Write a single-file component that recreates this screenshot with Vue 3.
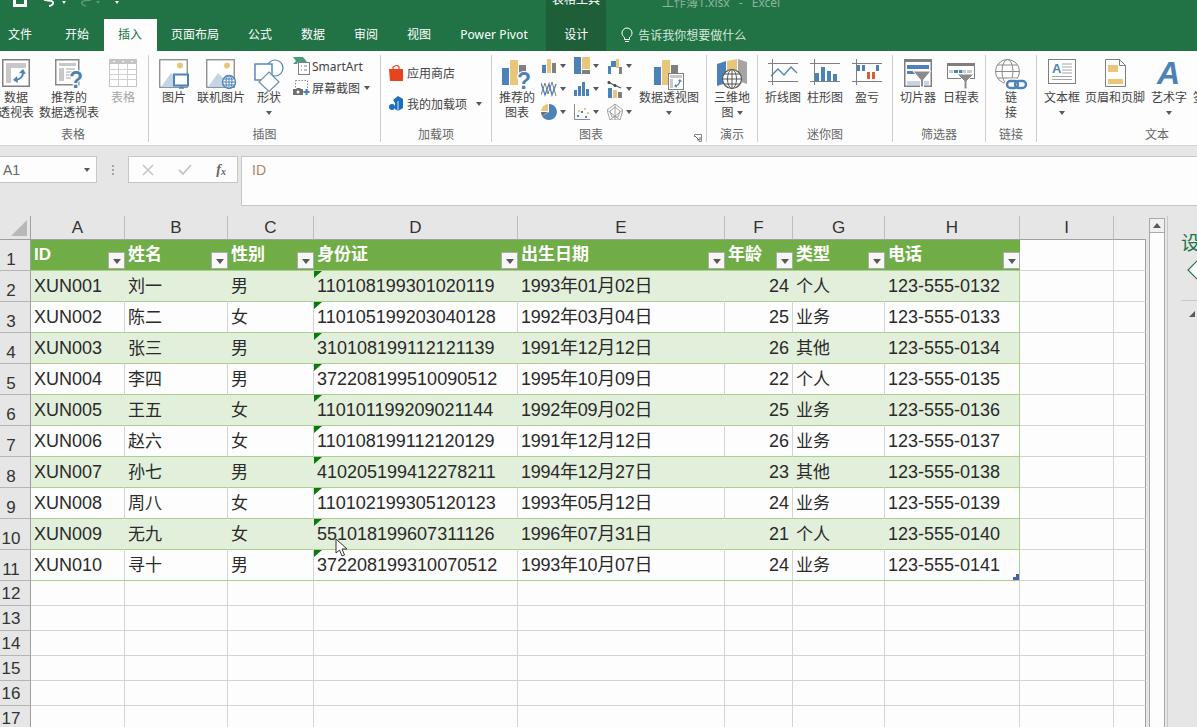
<script setup>
const columns = ['A', 'B', 'C', 'D', 'E', 'F', 'G', 'H', 'I', '']
const headers = ['ID', '姓名', '性别', '身份证', '出生日期', '年龄', '类型', '电话']
const people = [
  ['XUN001', '刘一', '男', '110108199301020119', '1993年01月02日', 24, '个人', '123-555-0132'],
  ['XUN002', '陈二', '女', '110105199203040128', '1992年03月04日', 25, '业务', '123-555-0133'],
  ['XUN003', '张三', '男', '310108199112121139', '1991年12月12日', 26, '其他', '123-555-0134'],
  ['XUN004', '李四', '男', '372208199510090512', '1995年10月09日', 22, '个人', '123-555-0135'],
  ['XUN005', '王五', '女', '110101199209021144', '1992年09月02日', 25, '业务', '123-555-0136'],
  ['XUN006', '赵六', '女', '110108199112120129', '1991年12月12日', 26, '业务', '123-555-0137'],
  ['XUN007', '孙七', '男', '410205199412278211', '1994年12月27日', 23, '其他', '123-555-0138'],
  ['XUN008', '周八', '女', '110102199305120123', '1993年05月12日', 24, '业务', '123-555-0139'],
  ['XUN009', '无九', '女', '551018199607311126', '1996年07月31日', 21, '个人', '123-555-0140'],
  ['XUN010', '寻十', '男', '372208199310070512', '1993年10月07日', 24, '业务', '123-555-0141']
]
const emptyRows = [12, 13, 14, 15, 16, 17]
const cellClass = ['c-id', 'c-cjk', 'c-cjk', 'c-id', 'c-date', 'c-num', 'c-cjk', 'c-id']
</script>

<template>
  <div class="app">
    <div class="titlebar">
      <div class="qat">
        <svg class="q-save" width="14" height="7" viewBox="0 0 14 7"><path d="M0 0h14v7H0z" fill="#fff"/><path d="M3 0h8v4H3z" fill="#217346"/></svg>
        <svg class="q-undo" width="12" height="7" viewBox="0 0 12 7"><path d="M1 0c3 1 8 0 9 2s-2 4-4 4" fill="none" stroke="#fff" stroke-width="1.8"/></svg>
        <span class="q-caret"></span>
        <svg class="q-redo" width="18" height="7" viewBox="0 0 18 7"><path d="M15 0c-3 1-8 0-9 2s2 4 4 4" fill="none" stroke="#5b9a78" stroke-width="1.6"/></svg>
        <span class="q-caret dim"></span>
        <span class="q-caret far"></span>
      </div>
      <div class="ctx-title">表格工具</div>
      <div class="doc-title">工作簿1.xlsx - Excel</div>
    </div>

    <div class="tabs">
      <span class="tab first">文件</span>
      <span class="tab second">开始</span>
      <span class="tab active">插入</span>
      <span class="tab">页面布局</span>
      <span class="tab">公式</span>
      <span class="tab">数据</span>
      <span class="tab">审阅</span>
      <span class="tab">视图</span>
      <span class="tab pivot">Power Pivot</span>
      <span class="tab design">设计</span>
      <span class="tell">
        <svg width="12" height="16" viewBox="0 0 12 16"><path d="M3.5 10.5C2 9.3 1 8 1 6a5 5 0 0 1 10 0c0 2-1 3.3-2.5 4.5v2h-5z" fill="none" stroke="#fff" stroke-width="1"/><path d="M4 14.5h4" stroke="#fff"/></svg>
        告诉我你想要做什么
      </span>
    </div>

    <div class="ribbon">
      <section class="grp g1">
        <div class="grp-body">
          <div class="lg w36">
            <div class="ic"><svg width="28" height="28" viewBox="0 0 28 28"><rect x=".75" y=".75" width="26.5" height="26.5" fill="#fff" stroke="#7f7f7f" stroke-width="1.5"/><path d="M4 4h20v5H9v15H4z" fill="#c8c8c8"/><path d="M21 12c1 5-3 9-8 9" fill="none" stroke="#4d82b8" stroke-width="1.8"/><path d="M17 14l4-4 3 5zM15 17l-4 4 5 3z" fill="#4d82b8"/></svg></div>
            <span>数据</span><span>透视表</span>
          </div>
          <div class="lg w70">
            <div class="ic"><svg width="28" height="31" viewBox="0 0 28 31"><rect x=".75" y=".75" width="23" height="25" fill="#fff" stroke="#8a8a8a" stroke-width="1.5"/><path d="M4 4h17v3H4zM4 9h5v13H4z" fill="#c8c8c8"/><path d="M11 10h9M11 13h7M11 16h6M11 19h5" stroke="#a5a5a5"/><text class="q-mark" x="14" y="29">?</text></svg></div>
            <span>推荐的</span><span>数据透视表</span>
          </div>
          <div class="lg w38 off">
            <div class="ic"><svg width="28" height="28" viewBox="0 0 28 28"><rect x=".5" y=".5" width="27" height="27" fill="#fff" stroke="#c4c4c4"/><path d="M0 0h28v5H0z" fill="#c4c4c4"/><path d="M0 10.5h28M0 15.5h28M0 20.5h28M9.5 5v23M18.5 5v23" stroke="#cfcfcf"/><path d="M4 2h2v1H4zM13 2h2v1h-2zM22 2h2v1h-2z" fill="#fff"/></svg></div>
            <span>表格</span>
          </div>
        </div>
        <div class="grp-label">表格</div>
      </section>

      <section class="grp g2">
        <div class="grp-body">
          <div class="lg w50">
            <div class="ic"><svg width="30" height="31" viewBox="0 0 30 31"><rect x=".75" y=".75" width="27.5" height="27.5" fill="#fff" stroke="#7f7f7f" stroke-width="1.2"/><circle cx="21" cy="6.5" r="3" fill="#e8c77a"/><path d="M2 28l10-14 6 7 3 7z" fill="#c4d5e7"/><rect x="15" y="15.5" width="14" height="11" fill="#fff" stroke="#4d82b8" stroke-width="2"/><path d="M20 29h5M22.5 27v2" stroke="#4d82b8" stroke-width="1.5"/></svg></div>
            <span>图片</span>
          </div>
          <div class="lg w44">
            <div class="ic"><svg width="30" height="31" viewBox="0 0 30 31"><rect x=".75" y=".75" width="27.5" height="27.5" fill="#fff" stroke="#7f7f7f" stroke-width="1.2"/><circle cx="21" cy="6.5" r="3" fill="#e8c77a"/><path d="M2 28l10-14 7 7 3 7z" fill="#c4d5e7"/><g fill="#fff" stroke="#4d82b8"><circle cx="23" cy="23" r="6.5" stroke-width="1.4"/><ellipse cx="23" cy="23" rx="3" ry="6.5"/></g><path d="M16.5 23h13M17.5 20h11M17.5 26h11M23 16.5v13" stroke="#4d82b8" fill="none"/></svg></div>
            <span>联机图片</span>
          </div>
          <div class="lg w52">
            <div class="ic"><svg width="30" height="31" viewBox="0 0 30 31"><circle cx="21" cy="9" r="8" fill="#fff" stroke="#4d82b8" stroke-width="1.2"/><rect x="1" y="5" width="17" height="16" fill="#fff" stroke="#4d82b8" stroke-width="1.4"/><path d="M15 13l10 10-10 9.5L5 23z" fill="#fff" stroke="#6c8fb0" stroke-width="1.2"/></svg></div>
            <span>形状</span><i class="caret"></i>
          </div>
          <div class="small-col">
            <div class="sm">
              <svg width="17" height="18" viewBox="0 0 17 18"><path d="M0 0h10l4 5H5l-1 2H0l3-3z" fill="#4c9a7a"/><rect x="5.5" y="5.5" width="11" height="12" fill="#fff" stroke="#7f7f7f"/><path d="M8 9h1M11 9h3M8 13h1M11 13h3" stroke="#7f7f7f"/></svg>
              <span class="sm-l">SmartArt</span>
            </div>
            <div class="sm">
              <svg width="17" height="16" viewBox="0 0 17 16"><rect x="2.5" y=".5" width="12" height="11" fill="none" stroke="#8a8a8a" stroke-dasharray="1.5 1.5"/><path d="M0 9h3l1-1h3l1 1h2v6H0z" fill="#6f6f6f"/><circle cx="5" cy="12" r="1.5" fill="#fff"/><path d="M13.5 9v6M10.5 12h6" stroke="#4d82b8" stroke-width="2"/></svg>
              <span class="sm-l">屏幕截图</span><i class="caret caret-in"></i>
            </div>
          </div>
        </div>
        <div class="grp-label">插图</div>
      </section>

      <section class="grp g3">
        <div class="grp-body addins">
          <div class="sm">
            <svg width="14" height="16" viewBox="0 0 14 16"><path d="M0 4h14v12H1z" fill="#e8441c"/><path d="M4 5V2l4-2 2 2v3" fill="none" stroke="#e8441c" stroke-width="1.2"/></svg>
            <span class="sm-l">应用商店</span>
          </div>
          <div class="sm">
            <svg width="14" height="16" viewBox="0 0 14 16"><path d="M4 4l5-4 5 3v9l-5 3-3-2V7z" fill="#1e6fc0"/><circle cx="3" cy="11" r="3" fill="#1e6fc0"/><path d="M9 5v10" stroke="#fff" stroke-width=".8"/></svg>
            <span class="sm-l">我的加载项</span><i class="caret caret-far"></i>
          </div>
        </div>
        <div class="grp-label">加载项</div>
      </section>

      <section class="grp g4">
        <div class="grp-body">
          <div class="lg w50">
            <div class="ic"><svg width="30" height="31" viewBox="0 0 30 31"><path d="M0 9h7v17H0z" fill="#4d82b8"/><path d="M8 1h8v25H8z" fill="#e8c77a"/><path d="M17 6h7v8h-7z" fill="#7f7f7f"/><text class="q-mark" x="15" y="30">?</text></svg></div>
            <span>推荐的</span><span>图表</span>
          </div>
          <div class="chart-grid">
            <div class="ci"><svg width="16" height="16" viewBox="0 0 16 16"><path d="M1 7h4v8H1z" fill="#4d82b8"/><path d="M6 1h4v14H6z" fill="#e8c77a"/><path d="M11 5h4v10h-4z" fill="#7f7f7f"/></svg><i class="caret"></i></div>
            <div class="ci"><svg width="16" height="18" viewBox="0 0 16 18"><path d="M0 0h7v17H0z" fill="#4d82b8"/><path d="M8 0h8v12H8z" fill="#e8c77a"/><path d="M8 13h8v4H8z" fill="#7f7f7f"/></svg><i class="caret"></i></div>
            <div class="ci"><svg width="16" height="16" viewBox="0 0 16 16"><path d="M1 8h3v8H1zM5 3h4v6H4V3z" fill="#4d82b8"/><path d="M9 1h3v9H9z" fill="#e8c77a"/><path d="M12 9h3v7h-3z" fill="#7f7f7f"/></svg><i class="caret"></i></div>
            <div class="ci"><svg width="16" height="16" viewBox="0 0 16 16"><path d="M0 14L4 2l3 11 4-12 4 14" fill="none" stroke="#7f7f7f" stroke-width="1"/><path d="M0 2l4 12 4-11 3 11 4-11" fill="none" stroke="#4d82b8" stroke-width="1.3"/></svg><i class="caret"></i></div>
            <div class="ci"><svg width="16" height="16" viewBox="0 0 16 16"><path d="M0 9h3v6H0zM4 5h3v10H4zM8 1h3v14H8zM12 8h3v7h-3z" fill="#4d82b8"/></svg><i class="caret"></i></div>
            <div class="ci"><svg width="16" height="18" viewBox="0 0 16 18"><path d="M1 8h4v10H1z" fill="#4d82b8"/><path d="M6 10h4v8H6z" fill="#e8c77a"/><path d="M11 12h4v6h-4z" fill="#7f7f7f"/><path d="M1 2l6 3 7 3" fill="none" stroke="#555" stroke-width="1.2"/><circle cx="2" cy="2.5" r="1.5" fill="#444"/><circle cx="8" cy="5.5" r="1.5" fill="#444"/></svg><i class="caret"></i></div>
            <div class="ci"><svg width="16" height="16" viewBox="0 0 16 16"><path d="M8 8V0a8 8 0 1 1-7 12z" fill="#4d82b8"/><path d="M7 7V0a7.5 7.5 0 0 0-7 7z" fill="#e8c77a"/><path d="M0 8h7l-6 4a8 8 0 0 1-1-4z" fill="#6f6f6f"/></svg><i class="caret"></i></div>
            <div class="ci"><svg width="16" height="16" viewBox="0 0 16 16"><path d="M.5 0v15.5H16" fill="none" stroke="#8a8a8a"/><path d="M3 11h2v2H3zM7 7h2v2H7zM11 12h2v2h-2z" fill="#4d82b8"/><path d="M4 6h2v2H4zM10 4h2v2h-2zM13 8h2v2h-2z" fill="#e8c77a"/></svg><i class="caret"></i></div>
            <div class="ci"><svg width="16" height="16" viewBox="0 0 16 16"><path d="M8 0l8 6-3 10H3L0 6zM8 3l5 4-2 6H5L3 7zM8 0v16M0 6l13 10M16 6L3 16" fill="none" stroke="#9a9a9a" stroke-width=".9"/></svg><i class="caret"></i></div>
          </div>
          <div class="lg w58">
            <div class="ic"><svg width="30" height="31" viewBox="0 0 30 31"><path d="M0 8h7v18H0z" fill="#4d82b8"/><path d="M8 1h8v25H8z" fill="#e8c77a"/><path d="M17 6h7v8h-7z" fill="#7f7f7f"/><rect x="14.5" y="14.5" width="15" height="16" fill="#fff" stroke="#7f7f7f"/><path d="M16 16h12v3H16zM16 20h3v9h-3z" fill="#c8c8c8"/><path d="M26 21c0 3-2 6-5 6" fill="none" stroke="#4d82b8" stroke-width="1.2"/><path d="M24 22l2-2 2 3zM22 25l-2 2 3 2z" fill="#4d82b8"/></svg></div>
            <span>数据透视图</span><i class="caret"></i>
          </div>
        </div>
        <div class="grp-label launch">图表</div>
        <svg class="launcher" width="8" height="8" viewBox="0 0 8 8"><path d="M.5 3V.5h7v7H5" fill="none" stroke="#8a8a8a"/><path d="M1 2l4 4M3 6h3V3" fill="none" stroke="#666"/></svg>
      </section>

      <section class="grp g5">
        <div class="grp-body">
          <div class="lg w50">
            <div class="ic"><svg width="30" height="30" viewBox="0 0 30 30"><path d="M0 5l9-3v22l-9 3z" fill="#4d82b8"/><path d="M10 2l10-2v22l-10 2z" fill="#e8c77a"/><path d="M21 0l9 3v22l-9-3z" fill="#a5a5a5"/><g fill="#fff" stroke="#555"><circle cx="15" cy="20" r="9.5" stroke-width="1.2"/><ellipse cx="15" cy="20" rx="4.5" ry="9.5"/></g><path d="M5.5 20h19M7 15h16M7 25h16M15 10.5v19" fill="none" stroke="#555"/></svg></div>
            <span>三维地</span><span class="inline">图<i class="caret caret-in2"></i></span>
          </div>
        </div>
        <div class="grp-label">演示</div>
      </section>

      <section class="grp g6">
        <div class="grp-body">
          <div class="lg w50">
            <div class="ic"><svg width="30" height="27" viewBox="0 0 30 27"><path d="M0 4.5h30M0 22.5h30M4.5 0v26" stroke="#7f7f7f"/><path d="M3 17l7-7 6 6 7-8 6 6" fill="none" stroke="#4d82b8" stroke-width="1.3"/></svg></div>
            <span>折线图</span>
          </div>
          <div class="lg w34">
            <div class="ic"><svg width="30" height="27" viewBox="0 0 30 27"><path d="M0 4.5h30M0 22.5h30M4.5 0v26" stroke="#7f7f7f"/><path d="M5 14h4v8H5zM11 8h4v14h-4zM17 12h4v10h-4zM23 15h4v7h-4z" fill="#4d82b8"/></svg></div>
            <span>柱形图</span>
          </div>
          <div class="lg w50">
            <div class="ic"><svg width="30" height="27" viewBox="0 0 30 27"><path d="M0 4.5h30M0 22.5h30M4.5 0v26" stroke="#7f7f7f"/><path d="M5 6h3v6H5zM10 6h3v6h-3zM24 6h3v6h-3z" fill="#4d82b8"/><path d="M15 13h3v7h-3zM20 13h3v7h-3z" fill="#dd5b37"/></svg></div>
            <span>盈亏</span>
          </div>
        </div>
        <div class="grp-label">迷你图</div>
      </section>

      <section class="grp g7">
        <div class="grp-body">
          <div class="lg w50">
            <div class="ic"><svg width="28" height="28" viewBox="0 0 28 28"><rect x=".75" y=".75" width="26.5" height="26.5" fill="#fff" stroke="#7f7f7f" stroke-width="1.5"/><path d="M0 0h28v3H0z" fill="#7f7f7f"/><path d="M3 6h22v4H3zM3 12h9v3H3z" fill="#4d82b8"/><path d="M3 22h22v4H3z" fill="#c4d5e7"/><path d="M9 12h18l-7.5 9v7h-3v-7z" fill="#8a8a8a" stroke="#fff"/></svg></div>
            <span>切片器</span>
          </div>
          <div class="lg w36">
            <div class="ic"><svg class="tl" width="28" height="26" viewBox="0 0 28 26"><rect x=".5" y=".5" width="27" height="15" fill="#fff" stroke="#7f7f7f"/><path d="M0 0h28v3H0z" fill="#7f7f7f"/><path d="M2 7h4v3H2zM15 7h4v3h-4zM20 7h5v3h-5z" fill="#c8c8c8"/><path d="M7 7h4v3H7zM12 7h3v3h-3z" fill="#4d82b8"/><path d="M10 11h17l-7 7v8h-3v-8z" fill="#8a8a8a" stroke="#fff"/></svg></div>
            <span>日程表</span>
          </div>
        </div>
        <div class="grp-label">筛选器</div>
      </section>

      <section class="grp g8">
        <div class="grp-body">
          <div class="lg w50">
            <div class="ic"><svg width="32" height="31" viewBox="0 0 32 31"><g fill="none" stroke="#8a8a8a"><circle cx="12.5" cy="12.5" r="12"/><ellipse cx="12.5" cy="12.5" rx="5.5" ry="12"/><path d="M.5 12.5h24M2.5 6h20M2.5 19h20"/></g><g fill="#fff" stroke="#fff" stroke-width="5"><rect x="12" y="22" width="11" height="7" rx="3.5"/><rect x="20" y="22" width="11" height="7" rx="3.5"/></g><g fill="none" stroke="#4d82b8" stroke-width="2.4"><rect x="12" y="22" width="11" height="7" rx="3.5"/><rect x="20" y="22" width="11" height="7" rx="3.5"/></g></svg></div>
            <span>链</span><span>接</span>
          </div>
        </div>
        <div class="grp-label">链接</div>
      </section>

      <section class="grp g9">
        <div class="grp-body">
          <div class="lg w50">
            <div class="ic"><svg width="28" height="26" viewBox="0 0 28 26"><rect x=".5" y=".5" width="27" height="24" fill="#fff" stroke="#7f7f7f"/><text class="tb-a" x="4" y="14">A</text><path d="M14 5h10M14 8h10M14 11h10M14 14h10M4 17.5h20M4 20.5h20" stroke="#a5a5a5"/></svg></div>
            <span>文本框</span><i class="caret"></i>
          </div>
          <div class="lg w56">
            <div class="ic"><svg class="hf" width="21" height="28" viewBox="0 0 21 28"><path d="M.5.5h14l6 6v21H.5z" fill="#fff" stroke="#7f7f7f"/><path d="M14.5.5v6h6" fill="none" stroke="#7f7f7f"/><path d="M3 6h10v7H3zM3 20h15v5H3z" fill="#e8c77a"/></svg></div>
            <span>页眉和页脚</span>
          </div>
          <div class="lg w52">
            <div class="ic"><svg width="24" height="28" viewBox="0 0 24 28"><text class="wa" x="0" y="25">A</text></svg></div>
            <span>艺术字</span><i class="caret"></i>
          </div>
          <div class="lg sign"><div class="ic"></div><span>签</span></div>
        </div>
        <div class="grp-label">文本</div>
      </section>
    </div>

    <div class="formula">
      <div class="namebox"><span>A1</span><i class="caret"></i></div>
      <div class="dots"><i></i><i></i><i></i></div>
      <div class="fx-btns">
        <svg width="12" height="12" viewBox="0 0 12 12"><path d="M1 1l10 10M11 1L1 11" stroke="#c4c4c4" stroke-width="1.5"/></svg>
        <svg width="14" height="12" viewBox="0 0 14 12"><path d="M1 6l4 4 8-9" fill="none" stroke="#c4c4c4" stroke-width="1.8"/></svg>
        <span class="fx">f<sub>x</sub></span>
      </div>
      <div class="fx-input">ID</div>
    </div>

    <div class="work">
      <div class="sheet">
        <div class="corner"><i></i></div>
        <div v-for="c in columns" :key="'col' + c" class="colh">{{ c }}</div>

        <div class="rowh">1</div>
        <div v-for="h in headers" :key="h" class="th">
          {{ h }}
          <span class="filter"><i></i></span>
        </div>
        <div class="cell"></div>
        <div class="cell edge"></div>

        <template v-for="(p, r) in people" :key="p[0]">
          <div class="rowh">{{ r + 2 }}</div>
          <div
            v-for="(v, c) in p"
            :key="c"
            class="td"
            :class="[cellClass[c], { band: r % 2 === 0, last: c === 7 }]"
          >
            <i v-if="c === 3" class="tri"></i>
            {{ v }}
            <i v-if="c === 7 && r === 9" class="handle"></i>
          </div>
          <div class="cell"></div>
          <div class="cell edge"></div>
        </template>

        <template v-for="n in emptyRows" :key="n">
          <div class="rowh small">{{ n }}</div>
          <div v-for="k in 9" :key="k" class="cell"></div>
          <div class="cell edge"></div>
        </template>

        <svg class="pointer" width="13" height="19" viewBox="0 0 13 19"><path d="M1 1v14l3.5-3 2.5 6 2.5-1-2.500-6H12z" fill="#fff" stroke="#333" stroke-width="1"/></svg>
      </div>

      <div class="scroll">
        <div class="track">
          <div class="up"><i></i></div>
        </div>
      </div>

      <aside class="pane">
        <div class="pane-t">设</div>
        <svg class="pane-d" width="12" height="26" viewBox="0 0 12 26"><path d="M12 1L1 12l11 11" fill="#fff" stroke="#217346" stroke-width="1.2"/></svg>
        <div class="pane-l"></div>
        <i class="pane-tri"></i>
      </aside>
    </div>
  </div>
</template>

<style>
html, body { margin: 0; overflow: hidden; background: #e6e6e6; }
</style>

<style scoped>
.app {
  width: 1197px; height: 727px; overflow: hidden; display: flex; flex-direction: column;
  background: #e6e6e6; color: #444;
  font: 12px "Noto Sans", "Noto Sans CJK SC", sans-serif;
}
i { display: block; }

/* title strip */
.titlebar { height: 19px; flex: none; background: #217346; display: flex; align-items: flex-start; overflow: hidden; }
.qat { width: 546px; flex: none; display: flex; align-items: flex-start; }
.q-save { margin-left: 13px; }
.q-undo { margin-left: 16px; }
.q-redo { margin-left: 10px; }
.q-caret { width: 0; height: 0; margin: 1px 0 0 7px; border: 2.5px solid transparent; border-top: 3px solid #fff; border-bottom: 0; }
.q-caret.dim { border-top-color: #5b9a78; margin-left: 2px; }
.q-caret.far { margin-left: 15px; }
.ctx-title { width: 60px; height: 19px; flex: none; background: #1e5f3a; color: #fff; text-align: center; line-height: 0; overflow: hidden; }
.doc-title { margin-left: 56px; color: #8db69f; line-height: 6px; word-spacing: 6px; }

/* tabs */
.tabs { height: 32px; flex: none; background: #217346; display: flex; align-items: stretch; color: #fff; white-space: nowrap; }
.tab { padding: 0 14.5px; line-height: 31px; }
.tab.first { margin-left: -6.5px; }
.tab.second { margin-left: 4px; }
.tab.active { background: #fdfdfd; color: #217346; }
.tab.pivot { letter-spacing: .1px; width: 100.5px; box-sizing: border-box; padding-right: 0; }
.tab.design { background: #1e5f3a; padding: 0 18px; }
.tell { margin-left: 15px; display: flex; align-items: center; gap: 5px; padding-bottom: 1px; color: #d6e6dc; }

/* ribbon */
.ribbon { height: 95px; flex: none; box-sizing: border-box; background: #fdfdfd; border-bottom: 1px solid #d4d4d4; display: flex; overflow: hidden; padding-top: 4px; }
.grp { flex: none; height: 87px; box-sizing: border-box; border-right: 1px solid #cfcfcf; display: flex; flex-direction: column; position: relative; }
.grp-body { flex: 1; min-height: 0; display: flex; padding-top: 4px; align-items: flex-start; }
.grp-label { height: 15px; line-height: 15px; text-align: center; color: #666; white-space: nowrap; }
.grp-label.launch { padding-right: 16px; }
.launcher { position: absolute; right: 4px; bottom: 0; }
.g1 { width: 151px; margin-left: -2px; }
.g2 { width: 232px; }
.g3 { width: 111px; }
.g4 { width: 215px; }
.g5 { width: 51px; }
.g6 { width: 135px; }
.g7 { width: 93px; }
.g8 { width: 51px; }
.g9 { width: 240px; border-right: 0; }

.lg { flex: none; display: flex; flex-direction: column; align-items: center; line-height: 15px; white-space: nowrap; }
.lg.off { color: #a6a6a6; }
.ic { height: 31px; width: 100%; display: flex; justify-content: center; align-items: flex-start; }
.ic svg { flex: none; overflow: visible; }
.tl { margin-top: 4px; }
.w34 { width: 34px; } .w36 { width: 36px; } .w38 { width: 38px; } .w44 { width: 44px; }
.w50 { width: 50px; } .w52 { width: 52px; } .w56 { width: 56px; } .w58 { width: 58px; } .w70 { width: 70px; }
.sign { width: 24px; margin-left: -2px; align-items: flex-start; }

.caret { width: 0; height: 0; border: 3.5px solid transparent; border-top: 4px solid #595959; border-bottom: 0; }
.lg > .caret { margin-top: 6px; }
.caret-in { margin-left: 4px; }
.caret-far { margin-left: 9px; }
.caret-in2 { margin-left: 3px; }
.inline { display: flex; align-items: center; }

.small-col { margin: -3px 0 0 -2px; display: flex; flex-direction: column; gap: 2px; }
.sm { display: flex; align-items: center; height: 20px; white-space: nowrap; }
.sm svg { flex: none; }
.sm-l { margin-left: 2px; }
.addins { flex-direction: column; padding: 8px 0 0 8px; gap: 11px; }
.addins .sm-l { margin-left: 4px; }

.chart-grid { flex: none; margin: -5px 0 0 -1px; display: grid; grid-template-columns: repeat(3, 33px); grid-auto-rows: 23px; }
.ci { display: flex; align-items: center; }
.ci svg { flex: none; }
.ci .caret { margin-left: 3px; }

.q-mark { font: bold 23px "Liberation Sans", sans-serif; fill: #4d82b8; stroke: #fff; stroke-width: 2px; paint-order: stroke; }
.tb-a { font: bold 13px "Liberation Sans", sans-serif; fill: #4d82b8; }
.wa { font: italic bold 32px "Liberation Sans", sans-serif; fill: #4d82b8; }

/* formula bar */
.formula { height: 70px; flex: none; box-sizing: border-box; padding-top: 10px; display: flex; align-items: flex-start; }
.namebox { width: 98px; height: 27px; margin-left: -1px; box-sizing: border-box; background: #fdfdfd; border: 1px solid #c6c6c6; display: flex; align-items: center; justify-content: space-between; padding: 0 6px 0 3px; font: 14px "Liberation Sans", sans-serif; color: #666; }
.dots { width: 31px; height: 27px; display: flex; flex-direction: column; align-items: center; justify-content: center; gap: 2px; }
.dots i { width: 2px; height: 2px; background: #a5a5a5; }
.fx-btns { width: 110px; height: 27px; box-sizing: border-box; background: #fdfdfd; border: 1px solid #c6c6c6; display: flex; align-items: center; justify-content: space-between; padding: 0 11px 0 13px; }
.fx { font: italic bold 14px "Liberation Serif", serif; color: #666; line-height: 1; }
.fx sub { font-size: 10px; vertical-align: -1px; line-height: 0; }
.fx-input { flex: 1; height: 50px; margin-left: 3px; box-sizing: border-box; background: #fdfdfd; border: 1px solid #c6c6c6; border-right: 0; padding: 5px 0 0 10px; font: 14px/16px "Liberation Sans", sans-serif; color: #b08560; }

/* sheet */
.work { flex: 1; min-height: 0; display: flex; align-items: stretch; overflow: hidden; }
.sheet {
  flex: none; width: 1146px; position: relative; display: grid;
  grid-template-columns: 31px 94px 103px 86px 204px 207px 68px 92px 135px 94px 32px;
  grid-template-rows: 24px repeat(11, 31px) repeat(6, 25px);
  font: 18px "Liberation Sans", "Noto Sans CJK SC", sans-serif; color: #2a2a2a;
  background: #fdfdfd;
}
.corner { background: #e6e6e6; border-right: 1px solid #9f9f9f; border-bottom: 1px solid #9f9f9f; box-sizing: border-box; position: relative; }
.corner i { position: absolute; right: 3px; bottom: 3px; width: 0; height: 0; border-left: 16px solid transparent; border-bottom: 16px solid #b8b8b8; }
.colh { background: #e6e6e6; box-sizing: border-box; border-right: 1px solid #bdbdbd; border-bottom: 1px solid #9f9f9f; text-align: center; font-size: 17px; line-height: 24px; color: #333; }
.colh:nth-child(11) { border-right: 0; }
.rowh { background: #e6e6e6; box-sizing: border-box; border-right: 1px solid #9f9f9f; border-bottom: 1px solid #b5b5b5; font-size: 17px; color: #333; padding: 0 8px 0 0; text-align: center; display: flex; align-items: flex-end; justify-content: center; line-height: 21px; }
.rowh.small { line-height: 23px; }
.th { position: relative; background: #70ad47; color: #fff; font-weight: bold; font-size: 17px; box-sizing: border-box; border-bottom: 1px solid #a9d08e; padding-left: 3px; line-height: 30px; white-space: nowrap; }
.filter { position: absolute; right: 0; bottom: 1px; width: 17px; height: 17px; box-sizing: border-box; background: #f7f7f7; border: 1px solid #ababab; display: flex; align-items: center; justify-content: center; }
.filter i { width: 0; height: 0; border: 4px solid transparent; border-top: 5px solid #595959; border-bottom: 0; margin-top: 1px; }
.cell { box-sizing: border-box; border-right: 1px solid #d4d4d4; border-bottom: 1px solid #d4d4d4; }
.cell.edge { border-right: 1px solid #9f9f9f; }
.td { position: relative; box-sizing: border-box; border-right: 1px solid #d4d4d4; border-bottom: 1px solid #a9d08e; padding: 0 3px; line-height: 30px; white-space: nowrap; }
.td.band { background: #e2efda; border-right-color: #e2efda; }
.td.last { border-right-color: #a9d08e; }
.c-cjk { font-size: 17px; line-height: 31px; }
.c-date { letter-spacing: -.25px; }
.c-num { text-align: right; }
.tri { position: absolute; left: 0; top: 0; width: 0; height: 0; border-top: 7px solid #0a7a0a; border-right: 8px solid transparent; }
.handle { position: absolute; right: 0; bottom: 0; width: 6px; height: 6px; background: linear-gradient(#4a5cb8, #4a5cb8) right top / 3px 3px no-repeat, linear-gradient(#4a5cb8, #4a5cb8) left bottom / 6px 3px no-repeat; }
.pointer { position: absolute; left: 335px; top: 322px; }

/* scrollbar + side pane */
.scroll { flex: none; width: 22px; box-sizing: border-box; padding: 2px 3px 0 3px; border-right: 1px solid #c8c8c8; }
.track { height: 100%; background: #fdfdfd; border: 0 solid #a9a9a9; border-width: 0 1px; box-sizing: border-box; width: 16px; }
.up { height: 15px; background: #f0f0f0; border: 0 solid #a9a9a9; border-width: 1px 0; box-sizing: border-box; display: flex; align-items: center; justify-content: center; }
.up i { width: 0; height: 0; border: 4px solid transparent; border-bottom: 5px solid #595959; border-top: 0; }
.pane { flex: 1; min-width: 0; position: relative; overflow: hidden; }
.pane-t { color: #217346; font-size: 19px; line-height: 22px; margin: 16px 0 0 13px; white-space: nowrap; }
.pane-d { display: block; margin: 4px 0 0 19px; }
.pane-l { height: 1px; margin: 16px 0 0 13px; background: #c8c8c8; }
.pane-tri { position: absolute; left: 21px; top: 95px; width: 0; height: 0; border-left: 6px solid transparent; border-bottom: 6px solid #595959; }
</style>
